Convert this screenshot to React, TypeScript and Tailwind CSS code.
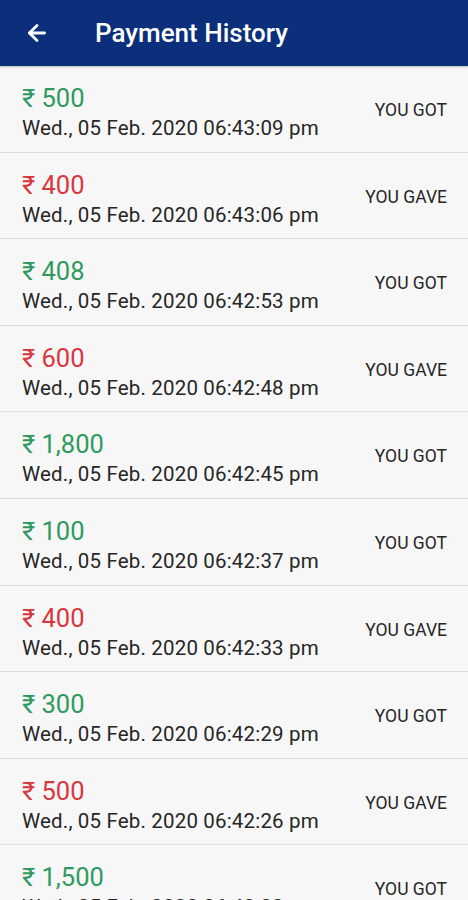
import { ArrowLeft } from "lucide-react"

type Payment = {
  amount: string
  date: string
  got: boolean
}

const payments: Payment[] = [
  { amount: "500", date: "Wed., 05 Feb. 2020 06:43:09 pm", got: true },
  { amount: "400", date: "Wed., 05 Feb. 2020 06:43:06 pm", got: false },
  { amount: "408", date: "Wed., 05 Feb. 2020 06:42:53 pm", got: true },
  { amount: "600", date: "Wed., 05 Feb. 2020 06:42:48 pm", got: false },
  { amount: "1,800", date: "Wed., 05 Feb. 2020 06:42:45 pm", got: true },
  { amount: "100", date: "Wed., 05 Feb. 2020 06:42:37 pm", got: true },
  { amount: "400", date: "Wed., 05 Feb. 2020 06:42:33 pm", got: false },
  { amount: "300", date: "Wed., 05 Feb. 2020 06:42:29 pm", got: true },
  { amount: "500", date: "Wed., 05 Feb. 2020 06:42:26 pm", got: false },
  { amount: "1,500", date: "Wed., 05 Feb. 2020 06:42:22 pm", got: true },
]

function PaymentRow({ payment }: { payment: Payment }) {
  return (
    <div className="flex h-[86.6px] shrink-0 items-start justify-between border-b border-[#dedede] pl-[22px] pr-[21px] pt-[17px]">
      <div className="flex flex-col">
        <span
          className={
            payment.got
              ? "text-[25.5px] leading-[30px] text-[#2f9a5f]"
              : "text-[25.5px] leading-[30px] text-[#d8373f]"
          }
        >
          ₹ {payment.amount}
        </span>
        <span className="text-[20.5px] leading-[31px] tracking-[0.17px] text-[#262626]">
          {payment.date}
        </span>
      </div>
      <span className="mt-[17px] text-[17.5px] leading-[20px] text-[#262626]">
        {payment.got ? "YOU GOT" : "YOU GAVE"}
      </span>
    </div>
  )
}

export default function App() {
  return (
    <div className="flex h-[900px] w-[468px] flex-col overflow-hidden bg-[#f7f7f7] font-['Roboto',sans-serif]">
      {/* Toolbar */}
      <div className="flex h-[66px] shrink-0 items-center bg-[#0b2f7a] pl-[24px] shadow-[0_1px_2px_rgba(0,0,0,0.25)]">
        <ArrowLeft size={26} strokeWidth={2.6} className="text-white" />
        <h1 className="ml-[45px] text-[26px] font-medium text-white">
          Payment History
        </h1>
      </div>

      {/* List */}
      <div className="flex flex-col">
        {payments.map((p, i) => (
          <PaymentRow key={i} payment={p} />
        ))}
      </div>
    </div>
  )
}
